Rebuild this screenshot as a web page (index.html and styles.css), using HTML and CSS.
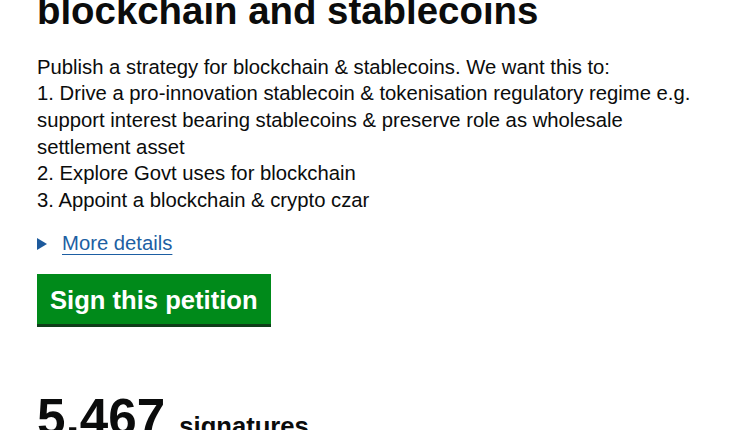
FILE: index.html
```html
<!DOCTYPE html>
<html lang="en">
<head>
<meta charset="utf-8">
<title>Petition</title>
<link rel="stylesheet" href="styles.css">
</head>
<body>
<main class="page">
  <h1 class="title">blockchain and stablecoins</h1>
  <p class="summary">Publish a strategy for blockchain &amp; stablecoins. We want this to:<br>1. Drive a pro-innovation stablecoin &amp; tokenisation regulatory regime e.g. support interest bearing stablecoins &amp; preserve role as wholesale settlement asset<br>2. Explore Govt uses for blockchain<br>3. Appoint a blockchain &amp; crypto czar</p>
  <details class="details">
    <summary class="details-summary"><span class="details-text">More details</span></summary>
  </details>
  <a class="button" href="#">Sign this petition</a>
  <p class="count"><span class="count-num">5,467 </span><span class="count-label">signatures</span></p>
</main>
</body>
</html>
```
FILE: styles.css
```css
html, body {
  margin: 0;
  padding: 0;
  background: #ffffff;
  overflow: hidden;
}
body {
  font-family: "Liberation Sans", Arial, sans-serif;
  color: #0b0c0c;
}
.page {
  padding: 0 37px;
  width: 676px;
}
.title {
  margin: -10px 0 0;
  font-size: 38.4px;
  line-height: 42.7px;
  font-weight: 700;
}
.summary {
  margin: 21px 0 0;
  font-size: 20.27px;
  line-height: 26.67px;
}
.details {
  margin-top: 17px;
}
.details-summary {
  list-style: none;
  display: flex;
  align-items: center;
  font-size: 20.27px;
  line-height: 25.6px;
  color: #1d5fa3;
  cursor: pointer;
}
.details-summary::-webkit-details-marker { display: none; }
.details-summary::before {
  content: "";
  width: 0;
  height: 0;
  border-left: 10px solid #1d5a9c;
  border-top: 6px solid transparent;
  border-bottom: 6px solid transparent;
  margin-right: 15px;
  margin-top: 1px;
}
.details-text {
  text-decoration: underline;
  text-decoration-thickness: 1px;
  text-underline-offset: 4px;
}
.button {
  display: inline-block;
  margin-top: 18px;
  padding: 12px 13px 9px 13px;
  background: #008a1a;
  box-shadow: 0 3px 0 #0f3d1a;
  color: #ffffff;
  font-size: 25.6px;
  line-height: 29px;
  font-weight: 700;
  text-decoration: none;
}
.count {
  margin: 66px 0 0;
  font-weight: 700;
  line-height: 56px;
}
.count-num {
  font-size: 51.2px;
}
.count-label {
  font-size: 25.6px;
}
```
